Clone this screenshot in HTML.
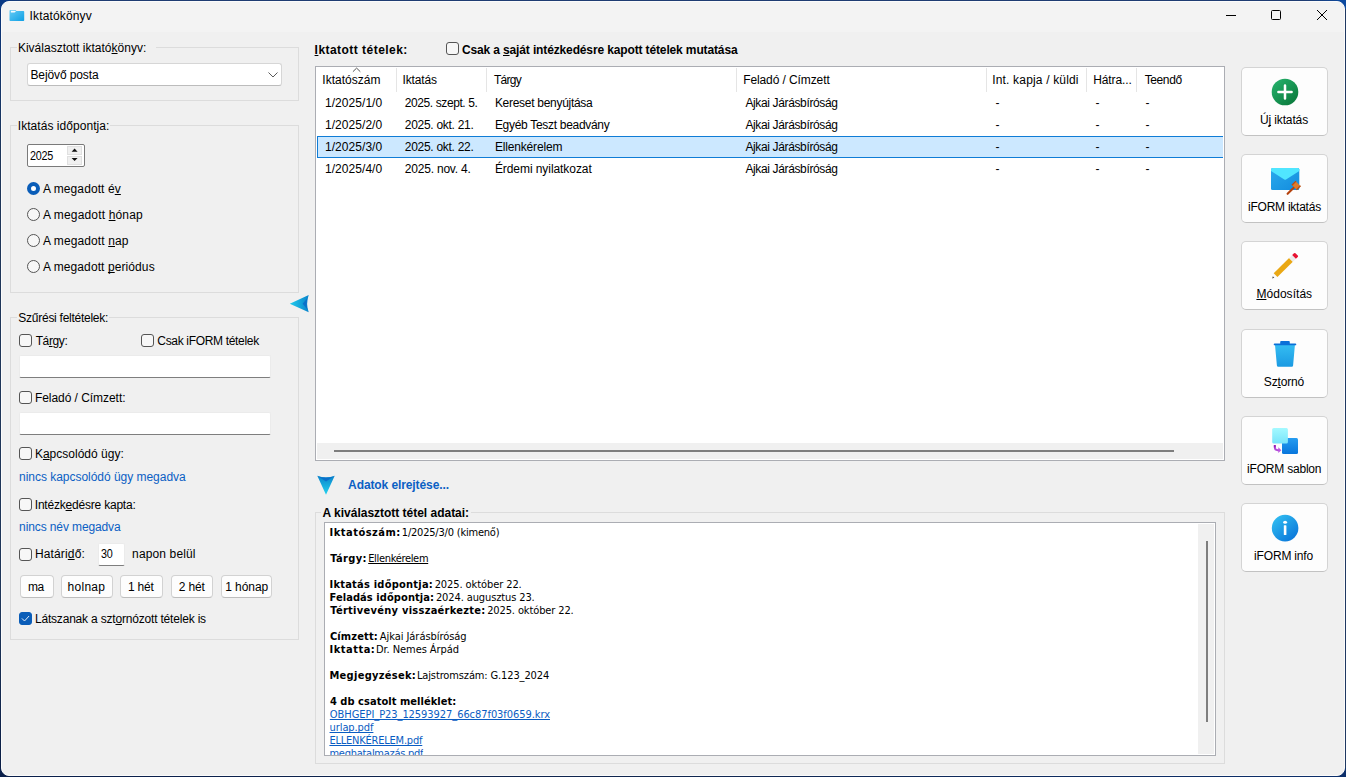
<!DOCTYPE html>
<html lang="hu">
<head>
<meta charset="utf-8">
<title>Iktatókönyv</title>
<style>
*{box-sizing:border-box;margin:0;padding:0}
html,body{width:1346px;height:777px;overflow:hidden}
body{background:#1f3862;font-family:"Liberation Sans",sans-serif;font-size:12px;color:#000;position:relative}
.bgtop{position:absolute;left:0;top:0;width:1346px;height:1px;background:linear-gradient(90deg,#0a3a85,#1e3c72 2%,#1e3c72 97%,#0d4a9f)}
.bgbot{position:absolute;left:0;top:776px;width:1346px;height:1px;background:linear-gradient(90deg,#0a1f4a,#10264f 50%,#0c2f6b)}
.cTL{position:absolute;left:0;top:0;width:9px;height:9px;background:#0a3a85}.cTR{position:absolute;left:1337px;top:0;width:9px;height:9px;background:#0d4a9f}.cBL{position:absolute;left:0;top:768px;width:9px;height:9px;background:#0a1f4a}.cBR{position:absolute;left:1337px;top:768px;width:9px;height:9px;background:#0c2f6b}
.bgleft{position:absolute;left:0;top:9px;width:1px;height:759px;background:linear-gradient(#0b357a,#1e3558 20%,#1e3558 80%,#0a1d45)}
.win{position:absolute;left:1px;top:1px;width:1344px;height:775px;background:#f0f0f0;border:1px solid #fbfbfb;border-radius:8px;overflow:hidden}
.tbar{position:absolute;left:0;top:0;width:1344px;height:30px;background:#f3f3f3}
.abs{position:absolute}
.t{position:absolute;white-space:nowrap;height:16px;text-decoration-skip-ink:none;text-decoration-thickness:1px;text-underline-offset:1px}
.t u{text-decoration:underline;text-underline-offset:1px;text-decoration-skip-ink:none;text-decoration-thickness:1px}
.grp{position:absolute;border:1px solid #dcdcdc}
.lblbg{position:absolute;background:#f0f0f0;height:14px}
.cb{position:absolute;width:13px;height:13px;border:1px solid #555;border-radius:3px;background:#f7f7f7}
.cb.on{background:#0a5db8;border-color:#0a5db8}
.rd{position:absolute;width:13px;height:13px;border:1px solid #555;border-radius:50%;background:#f7f7f7}
.rd.on{border:4px solid #0a5db8;background:#fff}
.inp{position:absolute;background:#fff;border:1px solid #ebebeb;border-bottom:1px solid #7e7e7e;border-radius:2px}
.btn{position:absolute;height:23px;top:575px;background:#fdfdfd;border:1px solid #d2d2d2;border-bottom-color:#bdbdbd;border-radius:4px}
.big{position:absolute;left:1241px;width:87px;height:69px;background:#fdfdfd;border:1px solid #d4d4d4;border-bottom-color:#c2c2c2;border-radius:5px}
.list{position:absolute;left:315px;top:66px;width:910px;height:395px;background:#fff;border:1px solid #abadb3}
.sep{position:absolute;top:68px;width:1px;height:24px;background:#e5e5e5}
.sel{position:absolute;left:317px;top:136px;width:906px;height:22px;background:#cce8ff;border:1px solid #0f7cd6;border-right:none}
</style>
</head>
<body>
<div class="bgtop"></div><div class="bgbot"></div><div class="bgleft"></div><div class="cTL"></div><div class="cTR"></div><div class="cBL"></div><div class="cBR"></div>
<div class="win"><div class="tbar"></div></div>

<!-- title icon -->
<svg class="abs" style="left:9px;top:9px" width="17" height="14" viewBox="0 0 17 14">
<defs><linearGradient id="fg" x1="0" y1="0" x2="1" y2="1"><stop offset="0" stop-color="#66ccf6"/><stop offset="1" stop-color="#0e9fe4"/></linearGradient></defs>
<path d="M0.5 1.8 Q0.5 1 1.3 1 H6.3 L7.5 1.9 H14.4 Q15.2 1.9 15.2 2.700 V11.2 Q15.2 12 14.4 12 H1.3 Q0.5 12 0.5 11.2 Z" fill="url(#fg)"/>
<path d="M1.9 1.8 H6.2 L6.9 2.4 L5.6 3.4 H1.9 Z" fill="#fff" opacity=".95"/>
</svg>
<!-- caption buttons -->
<svg class="abs" style="left:1220px;top:5px" width="115" height="20" viewBox="0 0 115 20">
<path d="M6 10.5 H16" stroke="#000" stroke-width="1" fill="none"/>
<rect x="51.500" y="5.500" width="9" height="9" rx="1" fill="none" stroke="#000" stroke-width="1"/>
<path d="M97 5 L107 15 M107 5 L97 15" stroke="#000" stroke-width="1" fill="none"/>
</svg>

<!-- left groups -->
<div class="grp" style="left:10px;top:47px;width:289px;height:54px"></div>
<div class="lblbg" style="left:17px;top:41px;width:139px"></div>
<div class="grp" style="left:10px;top:125px;width:289px;height:168px"></div>
<div class="lblbg" style="left:17px;top:119px;width:93px"></div>
<div class="grp" style="left:10px;top:317px;width:289px;height:323px"></div>
<div class="lblbg" style="left:17px;top:311px;width:92px"></div>

<!-- combo -->
<div class="abs" style="left:27px;top:63px;width:255px;height:23px;background:#fff;border:1px solid #d6d6d6;border-bottom-color:#bcbcbc;border-radius:3px"></div>
<svg class="abs" style="left:267px;top:71px" width="12" height="8" viewBox="0 0 12 8"><path d="M1.5 1.5 L6 6 L10.500 1.5" stroke="#5a5a5a" stroke-width="1" fill="none"/></svg>

<!-- spinner -->
<div class="abs" style="left:27px;top:144px;width:58px;height:23px;background:#fff;border:1px solid #7a7a7a;border-radius:2px"></div>
<div class="abs" style="left:67px;top:146px;width:15px;height:9px;background:#f0f0f0;border:1px solid #e0e0e0"></div>
<div class="abs" style="left:67px;top:156px;width:15px;height:9px;background:#f0f0f0;border:1px solid #e0e0e0"></div>
<svg class="abs" style="left:71px;top:148px" width="8" height="15" viewBox="0 0 8 15"><path d="M0.6 3.700 L3.600 0.600 L6.600 3.700 Z M0.6 10 L3.600 13.100 L6.600 10 Z" fill="#111"/></svg>

<!-- radios -->
<div class="rd on" style="left:27px;top:182px"></div>
<div class="rd" style="left:27px;top:208px"></div>
<div class="rd" style="left:27px;top:234px"></div>
<div class="rd" style="left:27px;top:260px"></div>

<!-- splitter arrow -->
<svg class="abs" style="left:288px;top:293.4px" width="24" height="22" viewBox="0 0 24 22">
<defs><linearGradient id="ag" x1="0" y1="0" x2="1" y2="0"><stop offset="0" stop-color="#22cdec"/><stop offset="1" stop-color="#0a84cc"/></linearGradient></defs>
<path d="M1.800 10.800 L20.700 2.100 Q17.600 10.800 20.700 19.300 Z" fill="url(#ag)"/>
<path d="M14.600 10.800 L19.700 4.800 Q17.500 10.800 19.700 16.800 Z" fill="#0a6ac8" opacity=".85"/>
</svg>

<!-- filter controls -->
<div class="cb" style="left:19px;top:334px"></div>
<div class="cb" style="left:141px;top:334px"></div>
<div class="inp" style="left:19px;top:355px;width:252px;height:23px"></div>
<div class="cb" style="left:19px;top:391px"></div>
<div class="inp" style="left:19px;top:412px;width:252px;height:23px"></div>
<div class="cb" style="left:19px;top:447px"></div>
<div class="cb" style="left:19px;top:498px"></div>
<div class="cb" style="left:19px;top:548px"></div>
<div class="inp" style="left:98px;top:543px;width:27px;height:23px"></div>
<div class="btn" style="left:20px;width:34px"></div>
<div class="btn" style="left:61px;width:52px"></div>
<div class="btn" style="left:120px;width:43px"></div>
<div class="btn" style="left:171px;width:42px"></div>
<div class="btn" style="left:221px;width:51px"></div>
<div class="cb on" style="left:19px;top:612px"></div>
<svg class="abs" style="left:19px;top:612px" width="13" height="13" viewBox="0 0 13 13"><path d="M3.2 6.700 L5.500 9 L9.800 4.300" stroke="#eef4fb" stroke-width="0.950" fill="none" stroke-linecap="round" stroke-linejoin="round"/></svg>

<!-- centre -->
<div class="cb" style="left:446px;top:42px"></div>
<div class="list"></div>
<div class="sep" style="left:396px"></div>
<div class="sep" style="left:486px"></div>
<div class="sep" style="left:736px"></div>
<div class="sep" style="left:986px"></div>
<div class="sep" style="left:1086px"></div>
<div class="sep" style="left:1136px"></div>
<svg class="abs" style="left:352px;top:67px" width="10" height="6" viewBox="0 0 10 6"><path d="M0.900 4.700 L4.600 1.100 L8.300 4.700" stroke="#555" stroke-width="1" fill="none"/></svg>
<div class="sel"></div>
<div class="abs" style="left:317px;top:443px;width:906px;height:16px;background:#f0f0f0"></div>
<div class="abs" style="left:334px;top:450px;width:840px;height:2px;background:#7e7e7e"></div>

<!-- down arrow -->
<svg class="abs" style="left:315px;top:473px" width="22" height="24" viewBox="0 0 22 24">
<defs><linearGradient id="dg" x1="0" y1="0" x2="0" y2="1"><stop offset="0" stop-color="#0a84cc"/><stop offset="1" stop-color="#24d2ee"/></linearGradient></defs>
<path d="M2.300 2.700 Q11 5.800 19.700 2.700 L11 21.700 Z" fill="url(#dg)"/>
<path d="M3.400 3.500 Q11 6 18.600 3.500 L11 8.400 Z" fill="#0a6ac8" opacity=".85"/>
</svg>

<!-- detail group -->
<div class="grp" style="left:315px;top:512px;width:910px;height:252px"></div>
<div class="lblbg" style="left:321px;top:506px;width:150px"></div>
<div class="abs" style="left:324px;top:522px;width:892px;height:234px;background:#fff;border:1px solid #abadb3"></div>
<div class="abs" style="left:1198px;top:524px;width:16px;height:230px;background:#f0f0f0"></div>
<div class="abs" style="left:1206px;top:541px;width:2px;height:181px;background:#7e7e7e"></div>

<!-- big buttons -->
<div class="big" style="top:67px"></div>
<div class="big" style="top:154px"></div>
<div class="big" style="top:241px"></div>
<div class="big" style="top:329px"></div>
<div class="big" style="top:416px"></div>
<div class="big" style="top:503px"></div>

<!-- icons -->
<svg class="abs" style="left:1270px;top:77px" width="30" height="30" viewBox="0 0 30 30">
<defs><linearGradient id="gg" x1="0.150" y1="0.100" x2="0.850" y2="0.900"><stop offset="0" stop-color="#23ad68"/><stop offset="1" stop-color="#0c7c3e"/></linearGradient></defs>
<circle cx="15" cy="15" r="13.3" fill="url(#gg)"/>
<path d="M8.400 15 H21.600 M15 8.400 V21.600" stroke="#fff" stroke-width="2.500" stroke-linecap="round" fill="none"/>
</svg>

<svg class="abs" style="left:1268px;top:164px" width="36" height="34" viewBox="0 0 36 34">
<defs><linearGradient id="eg" x1="0" y1="0" x2="1" y2="1"><stop offset="0" stop-color="#2aaaec"/><stop offset="1" stop-color="#138cde"/></linearGradient></defs>
<rect x="3" y="4" width="28.300" height="21.900" rx="1.500" fill="url(#eg)"/>
<path d="M3 5.500 Q3 4 4.500 4 H29.800 Q31.300 4 31.300 5.500 V7 L18 15.600 Q17.150 16.100 16.300 15.600 L3 7 Z" fill="#50e6ff"/>
<path d="M19.600 29.800 L26.500 22.900" stroke="#b5420d" stroke-width="2.100" stroke-linecap="round" fill="none"/>
<g transform="rotate(45 28.200 21.500)">
<rect x="24.600" y="18.900" width="7.200" height="5.200" fill="#e07b2a"/>
<rect x="24.400" y="18.600" width="1.200" height="5.800" fill="#b84c12"/>
<rect x="30.800" y="18.600" width="1.200" height="5.800" fill="#b84c12"/>
</g>
</svg>

<svg class="abs" style="left:1268px;top:250px" width="34" height="32" viewBox="0 0 34 32">
<g transform="translate(4.200 28.400) rotate(-44.500)">
<path d="M0 0 L4.700 -2.650 V2.650 Z" fill="#fbfbfb"/>
<path d="M0 0 L1.900 -1.050 V1.050 Z" fill="#4a4a4a"/>
<rect x="4.700" y="-2.650" width="21.600" height="5.300" fill="#eaa814"/>
<rect x="26.300" y="-2.650" width="4.300" height="5.300" fill="#ebebeb"/>
<path d="M30.600 -2.650 H33.200 Q34.200 -2.650 34.200 -1.650 V1.650 Q34.200 2.650 33.200 2.650 H30.600 Z" fill="#e81232"/>
</g>
</svg>

<svg class="abs" style="left:1270px;top:338px" width="30" height="32" viewBox="0 0 30 32">
<defs><linearGradient id="tg" x1="0" y1="0" x2="0" y2="1"><stop offset="0" stop-color="#34bcf2"/><stop offset="1" stop-color="#1b9ae2"/></linearGradient></defs>
<path d="M5 7 H24.900 L23.100 27.400 Q23 28.700 21.700 28.700 H8.300 Q7 28.700 6.900 27.400 Z" fill="url(#tg)"/>
<path d="M10.200 5.400 V3.900 Q10.200 3 11.100 3 H18.900 Q19.800 3 19.800 3.900 V5.400 H25.300 Q26.300 5.400 26.300 6.400 Q26.300 7.300 25.300 7.300 H4.700 Q3.700 7.300 3.700 6.400 Q3.700 5.400 4.700 5.400 Z" fill="#0a70d8"/>
</svg>

<svg class="abs" style="left:1270px;top:425px" width="30" height="32" viewBox="0 0 30 32">
<defs>
<linearGradient id="sb" x1="0" y1="0" x2="0" y2="1"><stop offset="0" stop-color="#269cf0"/><stop offset="1" stop-color="#0876dc"/></linearGradient>
<linearGradient id="sc" x1="0" y1="0" x2="0" y2="1"><stop offset="0" stop-color="#a4f9ff"/><stop offset="1" stop-color="#78e4fa"/></linearGradient>
</defs>
<rect x="12" y="13" width="16" height="16" rx="1.500" fill="url(#sb)"/>
<rect x="2.200" y="3" width="15.700" height="15.600" rx="1.500" fill="url(#sc)"/>
<path d="M4.800 20.200 V22.300 Q4.800 25.200 7.800 25.200 H9" stroke="#b14ad8" stroke-width="1.900" fill="none"/>
<path d="M4.800 20 V22.500" stroke="#9720b6" stroke-width="1.900" fill="none"/>
<path d="M8.300 22.300 L11.300 25.200 L8.300 28.100 Z" fill="#bb55e0"/>
</svg>

<svg class="abs" style="left:1270px;top:513px" width="30" height="30" viewBox="0 0 30 30">
<defs><linearGradient id="ig" x1="0.150" y1="0.100" x2="0.850" y2="0.900"><stop offset="0" stop-color="#2fbaf0"/><stop offset="1" stop-color="#0b78da"/></linearGradient></defs>
<circle cx="15.100" cy="15.100" r="13.300" fill="url(#ig)"/>
<ellipse cx="15.100" cy="9.200" rx="1.950" ry="1.500" fill="#fff"/>
<rect x="13.800" y="12.200" width="2.600" height="9.900" rx="0.600" fill="#fff"/>
</svg>


<span class="t" style="left:29.59px;top:8px;font-size:12px;line-height:16px;letter-spacing:0.145px;">Iktatókönyv</span>
<span class="t" style="left:17.92px;top:40px;font-size:12px;line-height:16px;letter-spacing:0.013px;">Kiválasztott iktató<u>k</u>önyv:</span>
<span class="t" style="left:30.42px;top:67px;font-size:12px;line-height:16px;letter-spacing:-0.101px;">Bejövő posta</span>
<span class="t" style="left:17.79px;top:118px;font-size:12px;line-height:16px;letter-spacing:0.045px;">Iktatás időpontja:</span>
<span class="t" style="left:29.61px;top:148px;font-size:12px;line-height:16px;letter-spacing:-0.273px;transform:scaleX(0.9);transform-origin:0 0;">2025</span>
<span class="t" style="left:42.88px;top:181px;font-size:12px;line-height:16px;letter-spacing:0.095px;">A megadott é<u>v</u></span>
<span class="t" style="left:42.88px;top:207px;font-size:12px;line-height:16px;letter-spacing:0.159px;">A megadott <u>h</u>ónap</span>
<span class="t" style="left:42.88px;top:233px;font-size:12px;line-height:16px;letter-spacing:0.114px;">A megadott <u>n</u>ap</span>
<span class="t" style="left:42.88px;top:259px;font-size:12px;line-height:16px;letter-spacing:0.092px;">A megadott <u>p</u>eriódus</span>
<span class="t" style="left:18.36px;top:310px;font-size:12px;line-height:16px;letter-spacing:-0.265px;">Szűrési feltételek:</span>
<span class="t" style="left:35.63px;top:333px;font-size:12px;line-height:16px;letter-spacing:-0.373px;">Tá<u>r</u>gy:</span>
<span class="t" style="left:157.29px;top:333px;font-size:12px;line-height:16px;letter-spacing:-0.322px;">Csak iFORM tételek</span>
<span class="t" style="left:34.92px;top:390px;font-size:12px;line-height:16px;letter-spacing:-0.047px;">Feladó / Címzett:</span>
<span class="t" style="left:34.92px;top:446px;font-size:12px;line-height:16px;letter-spacing:0.008px;">K<u>a</u>pcsolódó ügy:</span>
<span class="t" style="left:19.10px;top:469px;font-size:12px;line-height:16px;color:#0b60c4;letter-spacing:-0.031px;">nincs kapcsolódó ügy megadva</span>
<span class="t" style="left:34.79px;top:497px;font-size:12px;line-height:16px;letter-spacing:-0.208px;">Intézk<u>e</u>désre kapta:</span>
<span class="t" style="left:19.10px;top:519px;font-size:12px;line-height:16px;color:#0b60c4;letter-spacing:-0.113px;">nincs név megadva</span>
<span class="t" style="left:34.92px;top:546px;font-size:12px;line-height:16px;letter-spacing:0.145px;">Határi<u>d</u>ő:</span>
<span class="t" style="left:101.39px;top:546px;font-size:12px;line-height:16px;letter-spacing:-0.322px;transform:scaleX(0.9);transform-origin:0 0;">30</span>
<span class="t" style="left:132.10px;top:546px;font-size:12px;line-height:16px;letter-spacing:0.134px;">napon belül</span>
<span class="t" style="left:28.10px;top:579px;font-size:12px;line-height:16px;letter-spacing:-0.575px;">ma</span>
<span class="t" style="left:67.57px;top:579px;font-size:12px;line-height:16px;letter-spacing:0.268px;">holnap</span>
<span class="t" style="left:127.99px;top:579px;font-size:12px;line-height:16px;letter-spacing:-0.225px;">1 hét</span>
<span class="t" style="left:178.80px;top:579px;font-size:12px;line-height:16px;letter-spacing:-0.178px;">2 hét</span>
<span class="t" style="left:225.24px;top:579px;font-size:12px;line-height:16px;letter-spacing:-0.070px;">1 hónap</span>
<span class="t" style="left:34.92px;top:611px;font-size:12px;line-height:16px;letter-spacing:-0.189px;">Látszanak a szt<u>o</u>rnózott tételek is</span>
<span class="t" style="left:314.60px;top:42px;font-size:12px;line-height:16px;font-weight:bold;letter-spacing:0.462px;"><u>I</u>ktatott tételek:</span>
<span class="t" style="left:461.91px;top:42px;font-size:12px;line-height:16px;font-weight:bold;letter-spacing:-0.134px;">Csak a <u>s</u>aját intézkedésre kapott tételek mutatása</span>
<span class="t" style="left:322.29px;top:72px;font-size:12px;line-height:16px;letter-spacing:0.019px;">Iktatószám</span>
<span class="t" style="left:402.54px;top:72px;font-size:12px;line-height:16px;letter-spacing:-0.128px;">Iktatás</span>
<span class="t" style="left:493.88px;top:72px;font-size:12px;line-height:16px;letter-spacing:-0.711px;">Tárgy</span>
<span class="t" style="left:743.17px;top:72px;font-size:12px;line-height:16px;letter-spacing:-0.094px;">Feladó / Címzett</span>
<span class="t" style="left:992.29px;top:72px;font-size:12px;line-height:16px;letter-spacing:0.166px;">Int. kapja / küldi</span>
<span class="t" style="left:1093.17px;top:72px;font-size:12px;line-height:16px;letter-spacing:-0.104px;">Hátra...</span>
<span class="t" style="left:1144.63px;top:72px;font-size:12px;line-height:16px;letter-spacing:-0.366px;">Teendő</span>
<span class="t" style="left:324.99px;top:95px;font-size:12px;line-height:16px;letter-spacing:0.052px;">1/2025/1/0</span>
<span class="t" style="left:404.80px;top:95px;font-size:12px;line-height:16px;letter-spacing:-0.410px;">2025. szept. 5.</span>
<span class="t" style="left:494.92px;top:95px;font-size:12px;line-height:16px;letter-spacing:-0.291px;">Kereset benyújtása</span>
<span class="t" style="left:745.38px;top:95px;font-size:12px;line-height:16px;letter-spacing:-0.360px;">Ajkai Járásbíróság</span>
<span class="t" style="left:995.62px;top:95px;font-size:12px;line-height:16px;">-</span>
<span class="t" style="left:1095.62px;top:95px;font-size:12px;line-height:16px;">-</span>
<span class="t" style="left:1145.62px;top:95px;font-size:12px;line-height:16px;">-</span>
<span class="t" style="left:324.99px;top:117px;font-size:12px;line-height:16px;letter-spacing:0.052px;">1/2025/2/0</span>
<span class="t" style="left:404.80px;top:117px;font-size:12px;line-height:16px;letter-spacing:-0.287px;">2025. okt. 21.</span>
<span class="t" style="left:494.92px;top:117px;font-size:12px;line-height:16px;letter-spacing:-0.301px;">Egyéb Teszt beadvány</span>
<span class="t" style="left:745.38px;top:117px;font-size:12px;line-height:16px;letter-spacing:-0.360px;">Ajkai Járásbíróság</span>
<span class="t" style="left:995.62px;top:117px;font-size:12px;line-height:16px;">-</span>
<span class="t" style="left:1095.62px;top:117px;font-size:12px;line-height:16px;">-</span>
<span class="t" style="left:1145.62px;top:117px;font-size:12px;line-height:16px;">-</span>
<span class="t" style="left:324.99px;top:139px;font-size:12px;line-height:16px;letter-spacing:0.052px;">1/2025/3/0</span>
<span class="t" style="left:404.80px;top:139px;font-size:12px;line-height:16px;letter-spacing:-0.287px;">2025. okt. 22.</span>
<span class="t" style="left:494.92px;top:139px;font-size:12px;line-height:16px;letter-spacing:-0.164px;">Ellenkérelem</span>
<span class="t" style="left:745.38px;top:139px;font-size:12px;line-height:16px;letter-spacing:-0.360px;">Ajkai Járásbíróság</span>
<span class="t" style="left:995.62px;top:139px;font-size:12px;line-height:16px;">-</span>
<span class="t" style="left:1095.62px;top:139px;font-size:12px;line-height:16px;">-</span>
<span class="t" style="left:1145.62px;top:139px;font-size:12px;line-height:16px;">-</span>
<span class="t" style="left:324.99px;top:161px;font-size:12px;line-height:16px;letter-spacing:0.052px;">1/2025/4/0</span>
<span class="t" style="left:404.80px;top:161px;font-size:12px;line-height:16px;letter-spacing:-0.208px;">2025. nov. 4.</span>
<span class="t" style="left:494.92px;top:161px;font-size:12px;line-height:16px;letter-spacing:-0.069px;">Érdemi nyilatkozat</span>
<span class="t" style="left:745.38px;top:161px;font-size:12px;line-height:16px;letter-spacing:-0.360px;">Ajkai Járásbíróság</span>
<span class="t" style="left:995.62px;top:161px;font-size:12px;line-height:16px;">-</span>
<span class="t" style="left:1095.62px;top:161px;font-size:12px;line-height:16px;">-</span>
<span class="t" style="left:1145.62px;top:161px;font-size:12px;line-height:16px;">-</span>
<span class="t" style="left:348.10px;top:477px;font-size:12px;line-height:16px;font-weight:bold;color:#0b60c4;letter-spacing:-0.100px;">Adatok elrejtése...</span>
<span class="t" style="left:322.60px;top:505px;font-size:12px;line-height:16px;font-weight:bold;letter-spacing:-0.016px;">A kiválasztott tétel adatai:</span>
<span class="t" style="left:1259.97px;top:112px;font-size:12px;line-height:16px;letter-spacing:-0.133px;">Ú<u>j</u> iktatás</span>
<span class="t" style="left:1248.10px;top:199px;font-size:12px;line-height:16px;letter-spacing:-0.248px;">iFORM iktatás</span>
<span class="t" style="left:1256.42px;top:286px;font-size:12px;line-height:16px;letter-spacing:0.043px;"><u>M</u>ódosítás</span>
<span class="t" style="left:1263.86px;top:374px;font-size:12px;line-height:16px;letter-spacing:-0.174px;">Sz<u>t</u>ornó</span>
<span class="t" style="left:1247.10px;top:461px;font-size:12px;line-height:16px;letter-spacing:-0.210px;">iFORM sablon</span>
<span class="t" style="left:1254.10px;top:548px;font-size:12px;line-height:16px;letter-spacing:-0.176px;">iFORM info</span>
<span class="t" style="left:329.49px;top:526px;font-size:11px;line-height:13px;font-weight:bold;font-family:&quot;DejaVu Sans Condensed&quot;,&quot;Liberation Sans&quot;,sans-serif;letter-spacing:0.502px;">Iktatószám:</span>
<span class="t" style="left:401.82px;top:526px;font-size:11px;line-height:13px;font-family:&quot;DejaVu Sans Condensed&quot;,&quot;Liberation Sans&quot;,sans-serif;letter-spacing:-0.208px;">1/2025/3/0 (kimenő)</span>
<span class="t" style="left:330.35px;top:552px;font-size:11px;line-height:13px;font-weight:bold;font-family:&quot;DejaVu Sans Condensed&quot;,&quot;Liberation Sans&quot;,sans-serif;letter-spacing:0.363px;">Tárgy:</span>
<span class="t" style="left:368.18px;top:552px;font-size:11px;line-height:13px;font-family:&quot;DejaVu Sans Condensed&quot;,&quot;Liberation Sans&quot;,sans-serif;letter-spacing:-0.327px;text-decoration:underline;">Ellenkérelem</span>
<span class="t" style="left:329.49px;top:578px;font-size:11px;line-height:13px;font-weight:bold;font-family:&quot;DejaVu Sans Condensed&quot;,&quot;Liberation Sans&quot;,sans-serif;letter-spacing:0.232px;">Iktatás időpontja:</span>
<span class="t" style="left:434.67px;top:578px;font-size:11px;line-height:13px;font-family:&quot;DejaVu Sans Condensed&quot;,&quot;Liberation Sans&quot;,sans-serif;letter-spacing:-0.088px;">2025. október 22.</span>
<span class="t" style="left:329.49px;top:591px;font-size:11px;line-height:13px;font-weight:bold;font-family:&quot;DejaVu Sans Condensed&quot;,&quot;Liberation Sans&quot;,sans-serif;letter-spacing:0.083px;">Feladás időpontja:</span>
<span class="t" style="left:435.92px;top:591px;font-size:11px;line-height:13px;font-family:&quot;DejaVu Sans Condensed&quot;,&quot;Liberation Sans&quot;,sans-serif;letter-spacing:-0.114px;">2024. augusztus 23.</span>
<span class="t" style="left:330.35px;top:604px;font-size:11px;line-height:13px;font-weight:bold;font-family:&quot;DejaVu Sans Condensed&quot;,&quot;Liberation Sans&quot;,sans-serif;letter-spacing:0.274px;">Tértivevény visszaérkezte:</span>
<span class="t" style="left:487.17px;top:604px;font-size:11px;line-height:13px;font-family:&quot;DejaVu Sans Condensed&quot;,&quot;Liberation Sans&quot;,sans-serif;letter-spacing:-0.119px;">2025. október 22.</span>
<span class="t" style="left:329.91px;top:630px;font-size:11px;line-height:13px;font-weight:bold;font-family:&quot;DejaVu Sans Condensed&quot;,&quot;Liberation Sans&quot;,sans-serif;letter-spacing:0.148px;">Címzett:</span>
<span class="t" style="left:379.82px;top:630px;font-size:11px;line-height:13px;font-family:&quot;DejaVu Sans Condensed&quot;,&quot;Liberation Sans&quot;,sans-serif;letter-spacing:-0.055px;">Ajkai Járásbíróság</span>
<span class="t" style="left:329.49px;top:643px;font-size:11px;line-height:13px;font-weight:bold;font-family:&quot;DejaVu Sans Condensed&quot;,&quot;Liberation Sans&quot;,sans-serif;letter-spacing:0.507px;">Iktatta:</span>
<span class="t" style="left:375.93px;top:643px;font-size:11px;line-height:13px;font-family:&quot;DejaVu Sans Condensed&quot;,&quot;Liberation Sans&quot;,sans-serif;letter-spacing:-0.056px;">Dr. Nemes Árpád</span>
<span class="t" style="left:329.49px;top:669px;font-size:11px;line-height:13px;font-weight:bold;font-family:&quot;DejaVu Sans Condensed&quot;,&quot;Liberation Sans&quot;,sans-serif;letter-spacing:0.284px;">Megjegyzések:</span>
<span class="t" style="left:416.93px;top:669px;font-size:11px;line-height:13px;font-family:&quot;DejaVu Sans Condensed&quot;,&quot;Liberation Sans&quot;,sans-serif;letter-spacing:-0.127px;">Lajstromszám: G.123_2024</span>
<span class="t" style="left:329.96px;top:695px;font-size:11px;line-height:13px;font-weight:bold;font-family:&quot;DejaVu Sans Condensed&quot;,&quot;Liberation Sans&quot;,sans-serif;letter-spacing:0.044px;">4 db csatolt melléklet:</span>
<span class="t" style="left:329.85px;top:708px;font-size:11px;line-height:13px;font-family:&quot;DejaVu Sans Condensed&quot;,&quot;Liberation Sans&quot;,sans-serif;color:#0a5cc2;letter-spacing:-0.061px;text-decoration:underline;">OBHGEPI_P23_12593927_66c87f03f0659.krx</span>
<span class="t" style="left:329.56px;top:721px;font-size:11px;line-height:13px;font-family:&quot;DejaVu Sans Condensed&quot;,&quot;Liberation Sans&quot;,sans-serif;color:#0a5cc2;letter-spacing:-0.087px;text-decoration:underline;">urlap.pdf</span>
<span class="t" style="left:329.43px;top:734px;font-size:11px;line-height:13px;font-family:&quot;DejaVu Sans Condensed&quot;,&quot;Liberation Sans&quot;,sans-serif;color:#0a5cc2;letter-spacing:-0.215px;text-decoration:underline;">ELLENKÉRELEM.pdf</span>
<span class="t" style="left:329.50px;top:747px;font-size:11px;line-height:13px;font-family:&quot;DejaVu Sans Condensed&quot;,&quot;Liberation Sans&quot;,sans-serif;color:#0a5cc2;letter-spacing:-0.272px;text-decoration:underline;clip-path:inset(0 0 8px 0);">meghatalmazás.pdf</span>
</body>
</html>
